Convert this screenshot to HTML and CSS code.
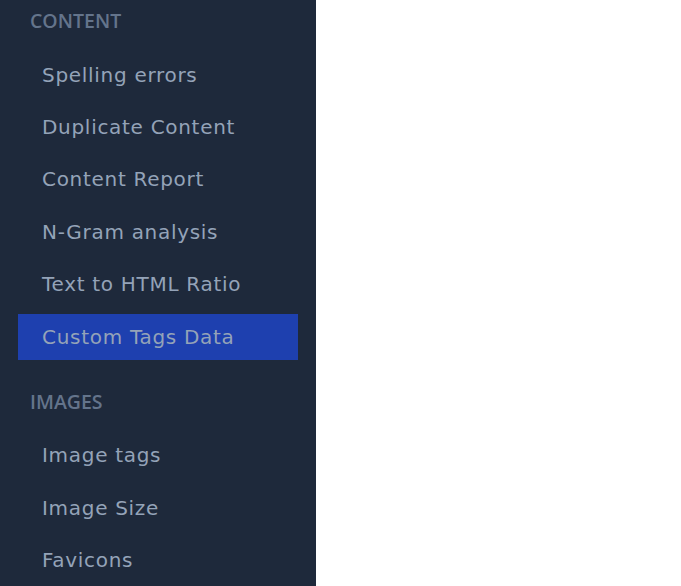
FILE: index.html
```html
<!DOCTYPE html>
<html lang="en">
<head>
<meta charset="utf-8">
<title>Sidebar</title>
<link rel="stylesheet" href="styles.css">
</head>
<body>
<div class="layout">
  <nav class="sidebar">
    <div class="section">
      <div class="section-title">CONTENT</div>
      <a class="nav-item" href="#">Spelling errors</a>
      <a class="nav-item" href="#">Duplicate Content</a>
      <a class="nav-item" href="#">Content Report</a>
      <a class="nav-item" href="#">N-Gram analysis</a>
      <a class="nav-item" href="#">Text to HTML Ratio</a>
      <a class="nav-item active" href="#">Custom Tags Data</a>
    </div>
    <div class="section section-next">
      <div class="section-title">IMAGES</div>
      <a class="nav-item" href="#">Image tags</a>
      <a class="nav-item" href="#">Image Size</a>
      <a class="nav-item" href="#">Favicons</a>
    </div>
  </nav>
  <main class="content"></main>
</div>
</body>
</html>
```

FILE: styles.css
```css
html, body {
  margin: 0;
  padding: 0;
  height: 100%;
  background: #ffffff;
}

.layout {
  display: flex;
  height: 100%;
}

.sidebar {
  width: 316px;
  flex: none;
  background: #1e293b;
  padding-top: 6px;
  box-sizing: border-box;
  overflow: hidden;
}

.content {
  flex: 1;
  background: #ffffff;
}

.section {
  display: flex;
  flex-direction: column;
}

.section-next {
  margin-top: 20.6px;
}

.section-title {
  height: 30px;
  line-height: 30px;
  padding-left: 30px;
  margin-bottom: 15.6px;
  font-family: "Open Sans", "Liberation Sans", sans-serif;
  font-weight: 600;
  font-size: 19.5px;
  color: #64748b;
}

.nav-item {
  display: block;
  height: 46px;
  line-height: 46px;
  margin: 0 18px 6.4px 18px;
  padding-left: 24px;
  font-family: "DejaVu Sans", sans-serif;
  font-size: 20px;
  letter-spacing: 0.7px;
  color: #94a3b8;
  text-decoration: none;
  white-space: nowrap;
}

.nav-item.active {
  background: #1e40af;
}
```
